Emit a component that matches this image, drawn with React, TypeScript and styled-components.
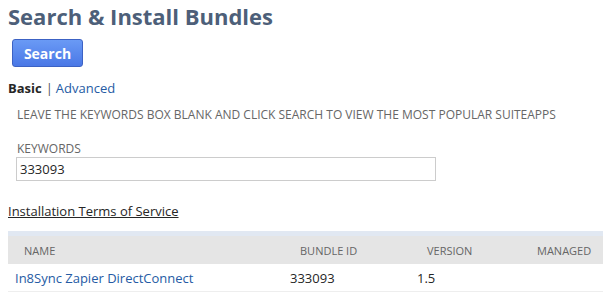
import styled, { createGlobalStyle } from 'styled-components';

const GlobalStyle = createGlobalStyle`
  body {
    margin: 0;
    background: #ffffff;
    font-family: 'Open Sans', 'Liberation Sans', sans-serif;
    color: #333333;
  }
`;

const rows = [
  { name: 'In8Sync Zapier DirectConnect', bundleId: '333093', version: '1.5', managed: '' },
];

const App = (): JSX.Element => {
  return (
    <>
      <GlobalStyle />
      <PageWrap>
        <Title>Search &amp; Install Bundles</Title>
        <SearchButton type="button">Search</SearchButton>
        <ModeTabs>
          <strong>Basic</strong>
          <Divider>|</Divider>
          <ModeLink href="#">Advanced</ModeLink>
        </ModeTabs>
        <Hint>Leave the keywords box blank and click search to view the most popular SuiteApps</Hint>
        <Field>
          <FieldLabel>Keywords</FieldLabel>
          <KeywordInput defaultValue="333093" />
        </Field>
        <TermsLink href="#">Installation Terms of Service</TermsLink>
        <ResultsTable>
          <thead>
            <tr>
              <HeadCell $width="260px">Name</HeadCell>
              <HeadCell $width="111px">Bundle ID</HeadCell>
              <HeadCell $width="94px">Version</HeadCell>
              <HeadCell>Managed</HeadCell>
            </tr>
          </thead>
          <tbody>
            {rows.map((row) => (
              <tr key={row.bundleId}>
                <BodyCell>
                  <RowLink href="#">{row.name}</RowLink>
                </BodyCell>
                <BodyCell>{row.bundleId}</BodyCell>
                <BodyCell>{row.version}</BodyCell>
                <BodyCell>{row.managed}</BodyCell>
              </tr>
            ))}
          </tbody>
        </ResultsTable>
      </PageWrap>
    </>
  );
};

const PageWrap = styled.div`
  display: flex;
  flex-direction: column;
  align-items: flex-start;
  padding: 0 0 0 8px;
`;

const Title = styled.h1`
  margin: 0;
  padding-top: 1px;
  font-size: 22px;
  line-height: 30px;
  font-weight: 700;
  color: #4d5f79;
`;

const SearchButton = styled.button`
  margin: 8px 0 0 4px;
  width: 71px;
  height: 28px;
  border: 1px solid #3c62c4;
  border-radius: 3px;
  background: linear-gradient(to bottom, #6a9af5, #4a78e6);
  color: #ffffff;
  font-family: 'Open Sans', 'Liberation Sans', sans-serif;
  font-size: 14px;
  font-weight: 700;
  padding: 0;
`;

const ModeTabs = styled.div`
  margin-top: 12px;
  font-size: 13px;
  line-height: 18px;
  color: #262626;
`;

const Divider = styled.span`
  margin: 0 3px 0 4px;
  color: #555555;
`;

const ModeLink = styled.a`
  color: #255ba4;
  text-decoration: none;
`;

const Hint = styled.div`
  margin: 9px 0 0 9px;
  font-size: 12px;
  line-height: 17px;
  text-transform: uppercase;
  color: #666666;
`;

const Field = styled.div`
  display: flex;
  flex-direction: column;
  margin: 18px 0 0 8px;
`;

const FieldLabel = styled.label`
  font-size: 12px;
  line-height: 16px;
  text-transform: uppercase;
  color: #666666;
  margin-left: 1px;
`;

const KeywordInput = styled.input`
  box-sizing: border-box;
  width: 420px;
  height: 24px;
  margin-top: 0;
  border: 1px solid #cccccc;
  padding: 0 3px;
  font-family: 'Open Sans', 'Liberation Sans', sans-serif;
  font-size: 13px;
  color: #262626;
  outline: none;
`;

const TermsLink = styled.a`
  margin-top: 21px;
  font-size: 13px;
  line-height: 18px;
  color: #262626;
  text-decoration: underline;
`;

const ResultsTable = styled.table`
  margin-top: 11px;
  width: 595px;
  table-layout: fixed;
  border-collapse: collapse;
  border-top: 5px solid #e1e8f2;
  font-size: 13px;
`;

const HeadCell = styled.th<{ $width?: string }>`
  width: ${(p) => p.$width || 'auto'};
  height: 28px;
  padding: 0 0 0 16px;
  background: #e5e5e5;
  text-align: left;
  font-weight: 400;
  font-size: 11px;
  text-transform: uppercase;
  color: #666666;
`;

const BodyCell = styled.td`
  height: 27px;
  padding: 0 0 0 6px;
  border-bottom: 1px solid #eeeeee;
  color: #262626;
  &:first-child {
    padding-left: 7px;
  }
`;

const RowLink = styled.a`
  color: #255ba4;
  text-decoration: none;
`;

export default App;
